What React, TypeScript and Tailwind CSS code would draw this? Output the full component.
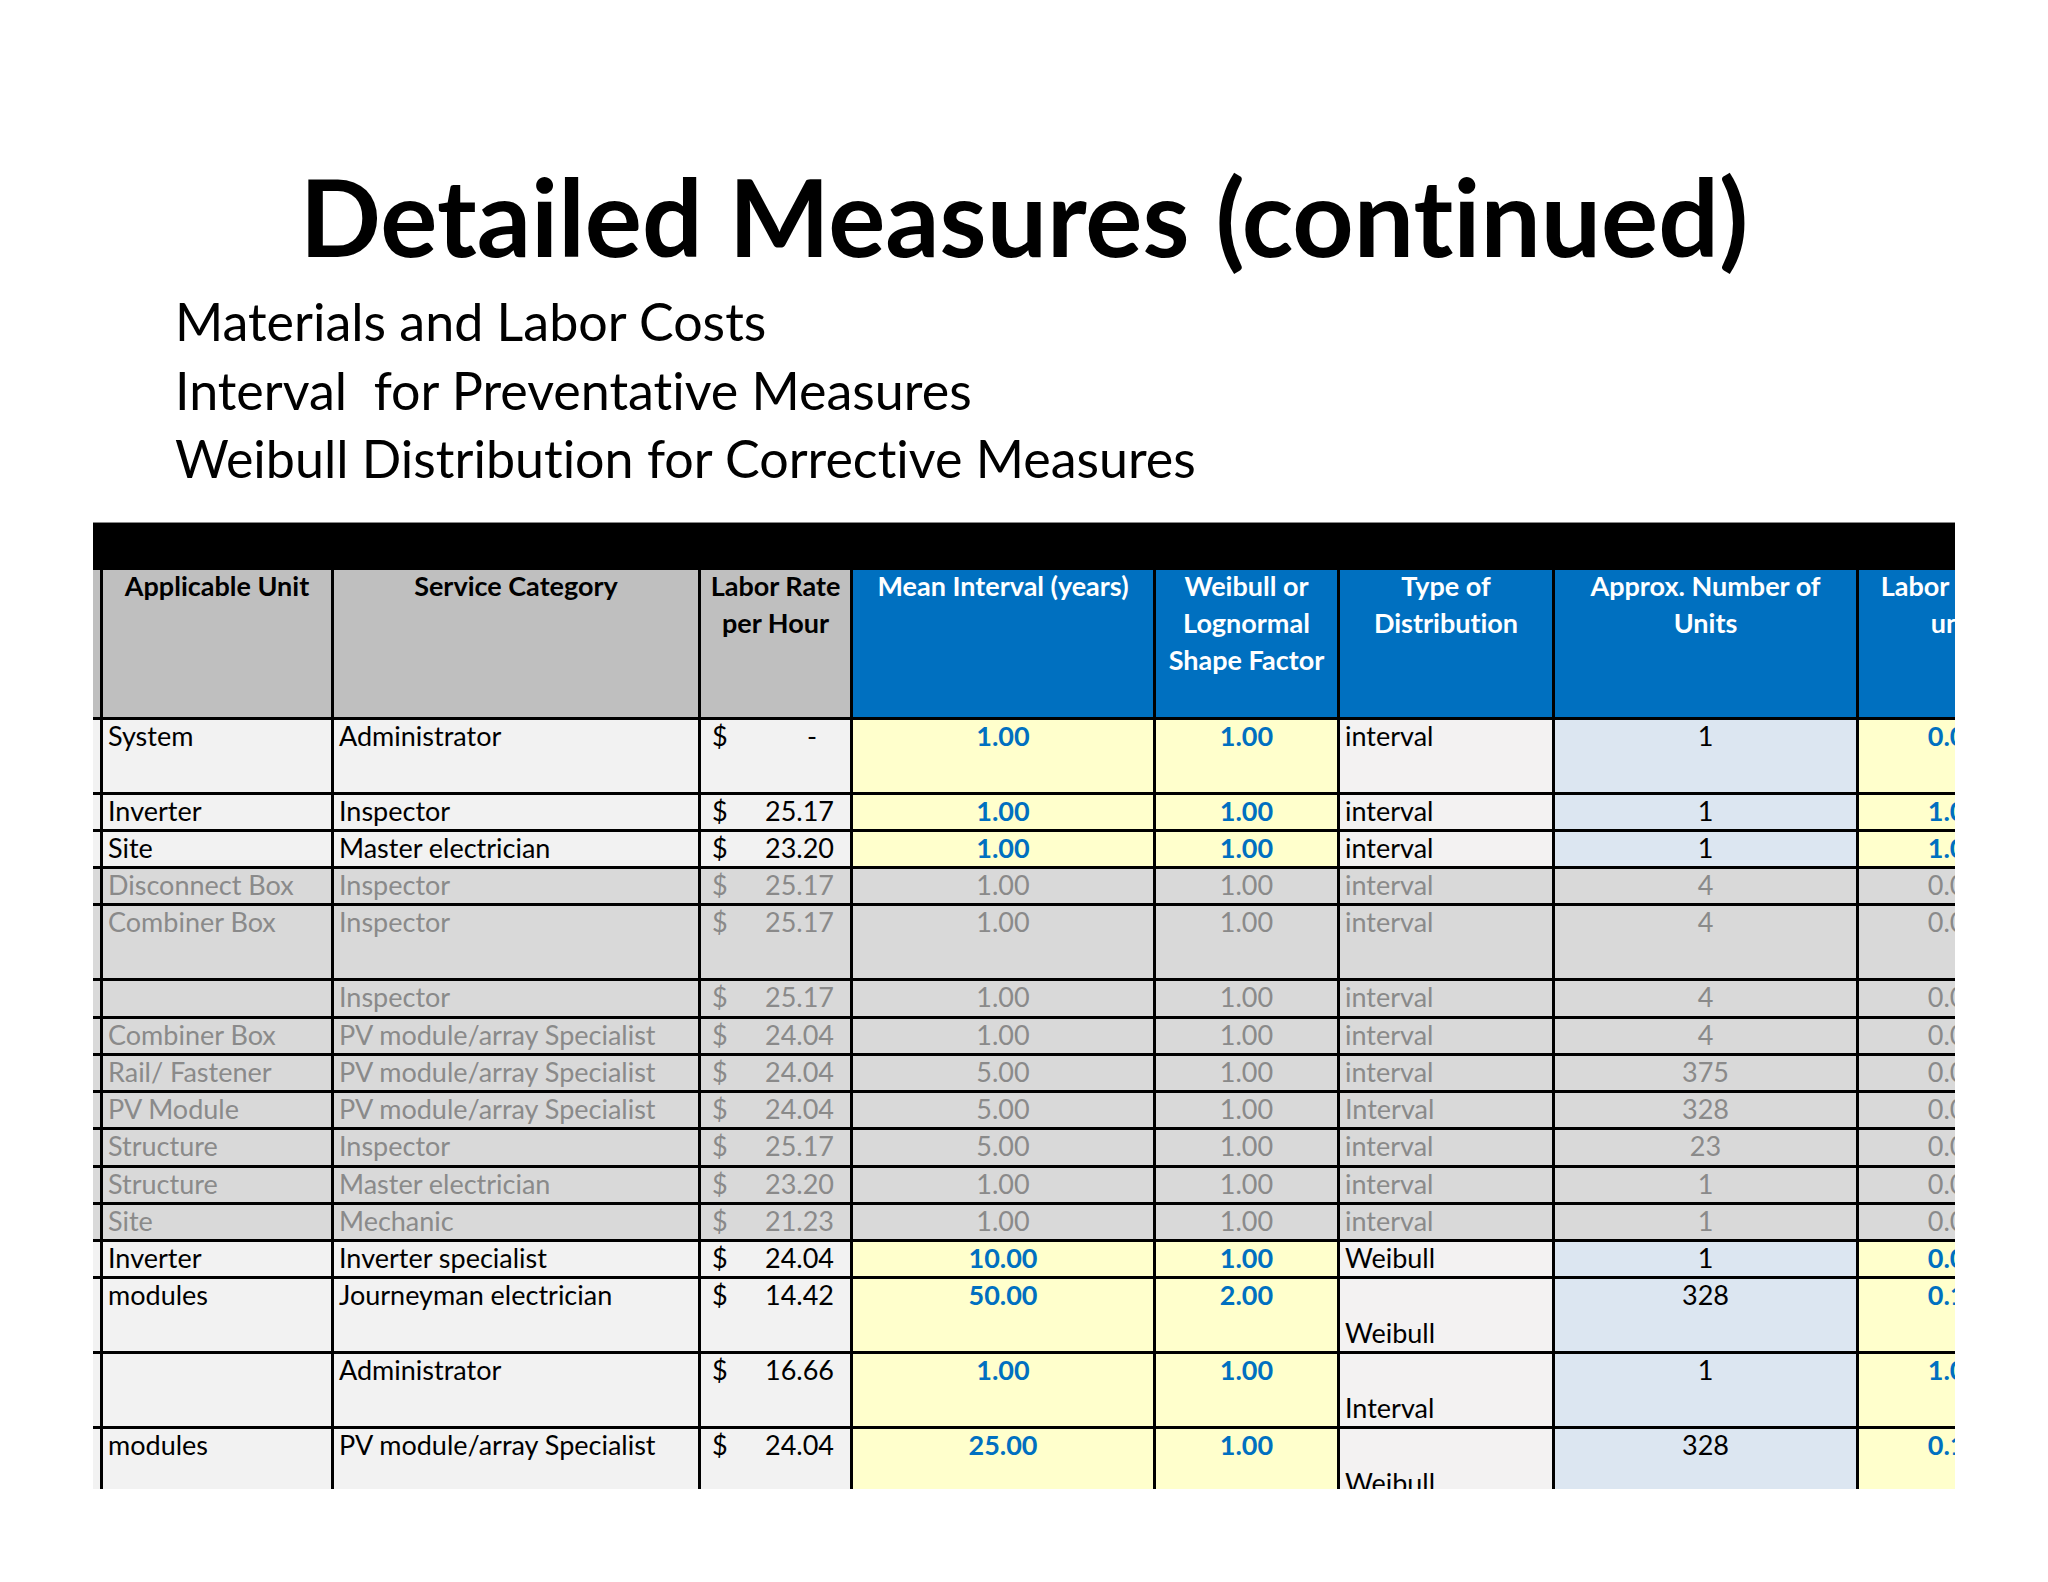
import React from "react";

type Row = {
  u: string;
  s: string;
  r: string;
  m: string;
  w: string;
  t: string;
  n: string;
  l: string;
  d?: boolean;
  g?: boolean;
  tb?: boolean;
};

const rows: Row[] = [
  { u: "System", s: "Administrator", r: "-", m: "1.00", w: "1.00", t: "interval", n: "1", l: "0.00", d: true },
  { u: "Inverter", s: "Inspector", r: "25.17", m: "1.00", w: "1.00", t: "interval", n: "1", l: "1.00" },
  { u: "Site", s: "Master electrician", r: "23.20", m: "1.00", w: "1.00", t: "interval", n: "1", l: "1.00" },
  { u: "Disconnect Box", s: "Inspector", r: "25.17", m: "1.00", w: "1.00", t: "interval", n: "4", l: "0.00", g: true },
  { u: "Combiner Box", s: "Inspector", r: "25.17", m: "1.00", w: "1.00", t: "interval", n: "4", l: "0.00", g: true, d: true },
  { u: "", s: "Inspector", r: "25.17", m: "1.00", w: "1.00", t: "interval", n: "4", l: "0.00", g: true },
  { u: "Combiner Box", s: "PV module/array Specialist", r: "24.04", m: "1.00", w: "1.00", t: "interval", n: "4", l: "0.00", g: true },
  { u: "Rail/ Fastener", s: "PV module/array Specialist", r: "24.04", m: "5.00", w: "1.00", t: "interval", n: "375", l: "0.00", g: true },
  { u: "PV Module", s: "PV module/array Specialist", r: "24.04", m: "5.00", w: "1.00", t: "Interval", n: "328", l: "0.00", g: true },
  { u: "Structure", s: "Inspector", r: "25.17", m: "5.00", w: "1.00", t: "interval", n: "23", l: "0.00", g: true },
  { u: "Structure", s: "Master electrician", r: "23.20", m: "1.00", w: "1.00", t: "interval", n: "1", l: "0.00", g: true },
  { u: "Site", s: "Mechanic", r: "21.23", m: "1.00", w: "1.00", t: "interval", n: "1", l: "0.00", g: true },
  { u: "Inverter", s: "Inverter specialist", r: "24.04", m: "10.00", w: "1.00", t: "Weibull", n: "1", l: "0.00" },
  { u: "modules", s: "Journeyman electrician", r: "14.42", m: "50.00", w: "2.00", t: "Weibull", n: "328", l: "0.10", d: true, tb: true },
  { u: "", s: "Administrator", r: "16.66", m: "1.00", w: "1.00", t: "Interval", n: "1", l: "1.00", d: true, tb: true },
  { u: "modules", s: "PV module/array Specialist", r: "24.04", m: "25.00", w: "1.00", t: "Weibull", n: "328", l: "0.10", d: true, tb: true },
];

function DataRow({ r }: { r: Row }) {
  const h = r.d ? "h-[75px]" : "h-[37.25px]";
  const base = r.g ? "bg-[#d9d9d9] text-[#8a8a8a]" : "bg-[#f2f2f2] text-black";
  const yellow = r.g ? "bg-[#d9d9d9] text-[#8a8a8a]" : "bg-[#ffffcc] text-[#0070c0] font-bold";
  const typeBg = r.g ? "bg-[#d9d9d9] text-[#8a8a8a]" : "bg-[#f3f2f2] text-black";
  const blue = r.g ? "bg-[#d9d9d9] text-[#8a8a8a]" : "bg-[#dce6f1] text-black";
  const cell = "shrink-0 h-full border-r-[3px] border-black leading-[31px] whitespace-nowrap overflow-hidden";
  return (
    <div className={`flex ${h} border-b-[3px] border-black`}>
      <div className={`${cell} w-[10px] ${base}`} />
      <div className={`${cell} w-[231px] pl-[5px] ${base}`}>{r.u}</div>
      <div className={`${cell} w-[367px] pl-[5px] ${base}`}>{r.s}</div>
      <div className={`${cell} w-[152px] pl-[11px] flex justify-between ${r.r === "-" ? "pr-[33px]" : "pr-[16px]"} ${base}`}>
        <span>$</span>
        <span>{r.r}</span>
      </div>
      <div className={`${cell} w-[303px] text-center ${yellow}`}>{r.m}</div>
      <div className={`${cell} w-[184px] text-center ${yellow}`}>{r.w}</div>
      <div className={`${cell} w-[215px] pl-[5px] flex ${r.tb ? "items-end pb-[3px]" : "items-start"} ${typeBg}`}>
        <span>{r.t}</span>
      </div>
      <div className={`${cell} w-[304px] text-center ${blue}`}>{r.n}</div>
      <div className={`${cell} w-[194px] text-center ${yellow}`}>{r.l}</div>
    </div>
  );
}

export default function App() {
  const hcell = "shrink-0 h-full border-r-[3px] border-black font-bold leading-[37px] text-center whitespace-nowrap";
  return (
    <div className="w-[2048px] h-[1582px] bg-white overflow-hidden font-['Lato',sans-serif] [font-variant-ligatures:none] text-black">
      <h1 className="mt-[162px] h-[107px] text-center text-[107px] leading-[107px] font-bold">
        Detailed Measures (continued)
      </h1>
      <div className="mt-[18px] pl-[175px] text-[52px] leading-[68.5px]">
        <div>Materials and Labor Costs</div>
        <div>Interval&nbsp; for Preventative Measures</div>
        <div>Weibull Distribution for Corrective Measures</div>
      </div>
      <div className="mt-[29.5px] ml-[93px] w-[1862px] h-[967px] overflow-hidden text-[27px]">
        <div className="w-[1960px]">
          <div className="h-[48px] bg-black border-t border-[#888]" />
          <div className="flex h-[149.5px] border-b-[3px] border-black">
            <div className={`${hcell} w-[10px] bg-[#bfbfbf]`} />
            <div className={`${hcell} w-[231px] bg-[#bfbfbf]`}>
              <div className="-mt-[3px]">Applicable Unit</div>
            </div>
            <div className={`${hcell} w-[367px] bg-[#bfbfbf]`}>
              <div className="-mt-[3px]">Service Category</div>
            </div>
            <div className={`${hcell} w-[152px] bg-[#bfbfbf]`}>
              <div className="-mt-[3px]">
                Labor Rate
                <br />
                per Hour
              </div>
            </div>
            <div className={`${hcell} w-[303px] bg-[#0070c0] text-white`}>
              <div className="-mt-[3px]">Mean Interval (years)</div>
            </div>
            <div className={`${hcell} w-[184px] bg-[#0070c0] text-white`}>
              <div className="-mt-[3px]">
                Weibull or
                <br />
                Lognormal
                <br />
                Shape Factor
              </div>
            </div>
            <div className={`${hcell} w-[215px] bg-[#0070c0] text-white`}>
              <div className="-mt-[3px]">
                Type of
                <br />
                Distribution
              </div>
            </div>
            <div className={`${hcell} w-[304px] bg-[#0070c0] text-white`}>
              <div className="-mt-[3px]">
                Approx. Number of
                <br />
                Units
              </div>
            </div>
            <div className={`${hcell} w-[194px] bg-[#0070c0] text-white`}>
              <div className="-mt-[3px]">
                Labor Hours
                <br />
                unit
              </div>
            </div>
          </div>
          {rows.map((r, i) => (
            <DataRow key={i} r={r} />
          ))}
        </div>
      </div>
    </div>
  );
}
